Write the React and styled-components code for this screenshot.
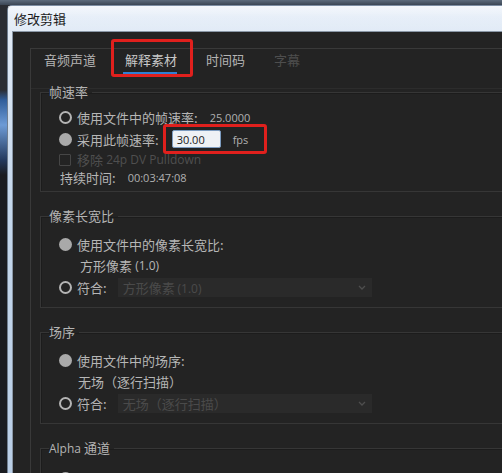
import React from "react";
import styled, { createGlobalStyle } from "styled-components";

const GlobalStyle = createGlobalStyle`
    html, body {
        margin: 0;
        padding: 0;
        background: #1d2026;
    }
    * { box-sizing: border-box; }
`;

const FONT = `"Noto Sans CJK SC", "Noto Sans", sans-serif`;

const Desktop = styled.div`
    width: 502px;
    height: 473px;
    overflow: hidden;
    padding: 5px 0 0 7px;
    background:
        linear-gradient(180deg, #5d6b7c 0px, #3b4654 5px, transparent 5px),
        linear-gradient(180deg, #2a2d33 0px, #2a2d33 90px, #2f5d9a 100px, #6d9bd6 125px, #243a5e 160px, #1a1c21 175px, #1a1c21 100%);
`;

const Window = styled.div`
    width: 520px;
    min-height: 480px;
    display: flex;
    flex-direction: column;
    background: linear-gradient(180deg, #e6eef8 0%, #c4d7ec 40%, #b8cde6 100%);
    border-left: 1px solid #6f7e90;
    border-top: 1px solid #7d8ea3;
    border-top-left-radius: 5px;
`;

const TitleBar = styled.div`
    flex: none;
    height: 25px;
    display: flex;
    align-items: center;
    padding-left: 6px;
    font-family: ${FONT};
    font-size: 13px;
    color: #1b1b1b;
    background: linear-gradient(180deg, rgba(255,255,255,0.55) 0%, rgba(255,255,255,0.1) 45%, rgba(255,255,255,0) 100%);
`;

const Body = styled.div`
    flex: 1;
    margin-left: 4px;
    position: relative;
    background: #232323;
    border-top: 1px solid #8a97a6;
    border-left: 1px solid #8a97a6;
    padding: 16px 0 0 17px;
`;

const TabPanel = styled.div`
    border-top: 1px solid #393939;
    border-left: 1px solid #393939;
    height: 100%;
`;

const TabRow = styled.div`
    display: flex;
    gap: 29px;
    padding: 1px 0 0 13px;
    height: 40px;
    border-bottom: 1px solid #2c2c2c;
`;

const Tab = styled.div`
    position: relative;
    font-family: ${FONT};
    font-size: 13px;
    line-height: 20px;
    height: 20px;
    color: ${p => (p.$disabled ? "#4e4e4e" : p.$active ? "#c8c8c8" : "#b4b4b4")};
    &::after {
        content: "";
        display: ${p => (p.$active ? "block" : "none")};
        position: absolute;
        left: -2px;
        right: 0;
        top: 22px;
        height: 2px;
        background: #2f7fd3;
    }
`;

const Sections = styled.div`
    display: flex;
    flex-direction: column;
    gap: 16px;
    padding-left: 9px;
    margin-top: -5px;
`;

const Group = styled.fieldset`
    margin: 0;
    padding: 0 0 0 18px;
    border: 1px solid #363636;
    border-right: none;
    box-shadow: inset 1px 1px 0 #1c1c1c;
    min-width: 0;
    height: ${p => p.$h}px;
`;

const Legend = styled.legend`
    margin-left: -10px;
    padding: 0 4px 0 0;
    font-family: ${FONT};
    font-size: 13px;
    line-height: 16px;
    color: #b4b4b4;
`;

const Latin = styled.span`
    font-family: "Open Sans", "Liberation Sans", sans-serif;
    font-size: ${p => p.$size || 11}px;
    color: ${p => p.$color || "inherit"};
`;

const Row = styled.div`
    display: flex;
    align-items: center;
    height: ${p => p.$h || 21}px;
    padding-left: ${p => p.$indent || 0}px;
    font-family: ${FONT};
    font-size: 13px;
    color: ${p => (p.$disabled ? "#4f4f4f" : "#b6b6b6")};
    white-space: nowrap;
`;

const Radio = styled.span`
    width: 13px;
    height: 13px;
    border-radius: 50%;
    flex: none;
    margin-right: 5px;
    background: ${p => (p.$checked ? "#a9a9a9" : "transparent")};
    border: ${p => (p.$checked ? "none" : "2px solid #b4b4b4")};
`;

const Checkbox = styled.span`
    width: 12px;
    height: 12px;
    flex: none;
    margin-right: 6px;
    border: 1px solid #464646;
    border-radius: 1px;
`;

const Value = styled.span`
    margin-left: ${p => p.$gap || 8}px;
    font-family: "Open Sans", "Liberation Sans", sans-serif;
    font-size: 11px;
    color: #b0b0b0;
`;

const NumInput = styled.span`
    width: 49px;
    height: 18px;
    margin-left: 13px;
    display: flex;
    align-items: center;
    padding-left: 4px;
    background: #eef1f5;
    border: 1px solid #7d9cc0;
    border-radius: 2px;
    font-family: "Open Sans", "Liberation Sans", sans-serif;
    font-size: 11px;
    color: #202020;
`;

const Select = styled.span`
    width: 254px;
    height: 19px;
    margin-left: 11px;
    display: flex;
    align-items: center;
    justify-content: space-between;
    padding: 0 6px 0 5px;
    background: #2a2a2a;
    color: #4a4a4a;
    font-family: ${FONT};
    font-size: 13px;
`;

const Chevron = () => (
    <svg width="8" height="5" viewBox="0 0 8 5">
        <path d="M1 1 L4 4 L7 1" fill="none" stroke="#4e4e4e" strokeWidth="1.3" />
    </svg>
);

const Annotation = styled.div`
    position: absolute;
    border: 3px solid #e0201d;
    border-radius: 3px;
    pointer-events: none;
`;

const Spacer = styled.div`
    height: ${p => p.$h}px;
`;

const App = () => {
    return (
        <>
            <GlobalStyle />
            <Desktop>
                <Window>
                    <TitleBar>修改剪辑</TitleBar>
                    <Body>
                        <TabPanel>
                            <TabRow>
                                <Tab>音频声道</Tab>
                                <Tab $active>解释素材</Tab>
                                <Tab>时间码</Tab>
                                <Tab $disabled>字幕</Tab>
                            </TabRow>
                            <Sections>
                                <Group $h={108}>
                                    <Legend>帧速率</Legend>
                                    <Spacer $h={6} />
                                    <Row $h={22}>
                                        <Radio />
                                        使用文件中的帧速率:
                                        <Value $gap={12}>25.0000</Value>
                                    </Row>
                                    <Row $h={22}>
                                        <Radio $checked />
                                        采用此帧速率:
                                        <NumInput>30.00</NumInput>
                                        <Value $gap={12}>fps</Value>
                                    </Row>
                                    <Row $h={19} $disabled>
                                        <Checkbox />
                                        移除 <Latin $size={12}>&nbsp;24p DV Pulldown</Latin>
                                    </Row>
                                    <Row $h={17} $indent={1}>
                                        持续时间:
                                        <Value $gap={12}>00:03:47:08</Value>
                                    </Row>
                                </Group>
                                <Group $h={100}>
                                    <Legend>像素长宽比</Legend>
                                    <Spacer $h={9} />
                                    <Row $h={22}>
                                        <Radio $checked />
                                        使用文件中的像素长宽比:
                                    </Row>
                                    <Row $h={21} $indent={21}>
                                        方形像素 <Latin $size={12}>&nbsp;(1.0)</Latin>
                                    </Row>
                                    <Row $h={23}>
                                        <Radio />
                                        符合:
                                        <Select>
                                            <span>方形像素 <Latin $size={12}>(1.0)</Latin></span>
                                            <Chevron />
                                        </Select>
                                    </Row>
                                </Group>
                                <Group $h={100}>
                                    <Legend>场序</Legend>
                                    <Spacer $h={9} />
                                    <Row $h={22}>
                                        <Radio $checked />
                                        使用文件中的场序:
                                    </Row>
                                    <Row $h={21} $indent={19}>
                                        无场（逐行扫描）
                                    </Row>
                                    <Row $h={23}>
                                        <Radio />
                                        符合:
                                        <Select>
                                            <span>无场（逐行扫描）</span>
                                            <Chevron />
                                        </Select>
                                    </Row>
                                </Group>
                                <Group $h={60}>
                                    <Legend>
                                        <Latin $size={12}>Alpha</Latin> 通道
                                    </Legend>
                                    <Spacer $h={10} />
                                    <Row $h={22}>
                                        <Radio $checked />
                                        使用文件中的 <Latin $size={12}>&nbsp;Alpha&nbsp;</Latin> 通道
                                    </Row>
                                </Group>
                            </Sections>
                        </TabPanel>
                        <Annotation style={{ left: 98, top: 7, width: 82, height: 38 }} />
                        <Annotation style={{ left: 150, top: 92, width: 104, height: 30 }} />
                    </Body>
                </Window>
            </Desktop>
        </>
    );
};

export default App;
